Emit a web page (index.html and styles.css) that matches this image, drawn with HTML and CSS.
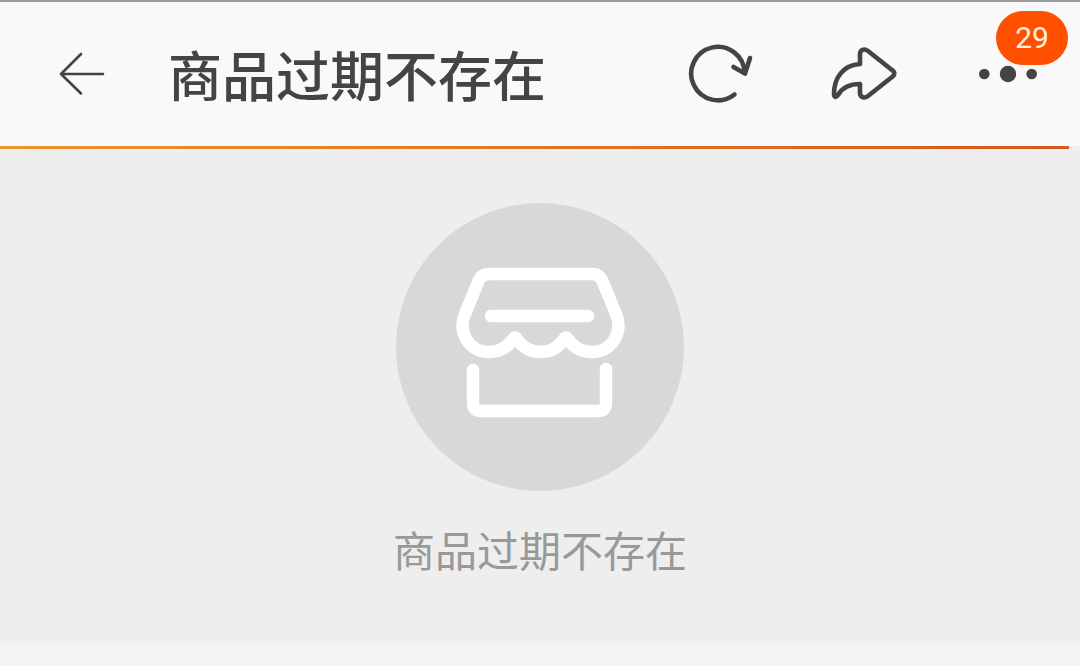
FILE: index.html
```html
<!DOCTYPE html>
<html lang="zh-CN">
<head>
    <meta charset="UTF-8">
    <meta name="viewport" content="width=device-width, initial-scale=1.0">
    <title>商品过期不存在</title>
    <link rel="stylesheet" href="styles.css">
</head>
<body>
    <header class="topbar">
        <button class="icon-btn back" type="button" aria-label="返回">
            <svg width="48" height="48" viewBox="0 0 48 48" stroke-width="2.6">
                <path d="M23 4 3 24l20 19.5M3 24h42"/>
            </svg>
        </button>
        <h1 class="title">商品过期不存在</h1>
        <div class="actions">
            <button class="icon-btn" type="button" aria-label="刷新">
                <svg width="72" height="72" viewBox="0 0 72 72" stroke-width="4.6">
                    <path d="M50.5 56.5A26.7 26.7 0 1 1 60.6 35"/>
                    <path d="M49.5 29 61 35.5 66 20"/>
                </svg>
            </button>
            <button class="icon-btn" type="button" aria-label="分享">
                <svg width="72" height="72" viewBox="0 0 72 72" stroke-width="4.6">
                    <path d="M32 26V16c0-4 4-6 8-3l24 19c3 2 3 5 0 7L40 58c-4 3-8 1-8-3V46C22 46 14 50 10 57 8 60 6 59 6 56 6 40 15 27 32 26Z"/>
                </svg>
            </button>
            <button class="icon-btn" type="button" aria-label="更多">
                <svg class="dots" width="72" height="72" viewBox="0 0 72 72">
                    <circle cx="12.3" cy="36" r="5.3"/>
                    <circle cx="36" cy="36" r="8.2"/>
                    <circle cx="59.7" cy="36" r="5.3"/>
                </svg>
                <span class="badge">29</span>
            </button>
        </div>
    </header>

    <main class="empty">
        <div class="progress"></div>
        <div class="picture">
            <svg width="288" height="288" viewBox="0 0 288 288" stroke-width="12.4">
                <!-- awning -->
                <path d="M93 71H196c5 0 8 2 10 6l14 34c8 19-5 38-24 38-11 0-19-5-25-14q-1-1-2 0c-6 9-14 14-24 14s-19-5-25-14q-1-1-2 0c-6 9-14 14-25 14-19 0-32-19-24-38l14-34c2-4 5-6 10-6Z"/>
                <path d="M95 113H192"/>
                <!-- shop front -->
                <path d="M77 167V200q0 8 8 8H202q8 0 8-8V166"/>
            </svg>
        </div>
        <p class="message">商品过期不存在</p>
    </main>
</body>
</html>
```
FILE: styles.css
```css
* {
    box-sizing: border-box;
}

body {
    margin: 0;
    background-color: #f4f4f4;
    font-family: Roboto, "Noto Sans CJK SC", sans-serif;
    color: #444;
}

.topbar {
    display: flex;
    align-items: center;
    height: 146px;
    padding: 0 36px 0 58px;
    border-top: 2px solid #9c9c9c;
    background-color: #f9f9f9;
}

.icon-btn {
    position: relative;
    display: block;
    padding: 0;
    border: none;
    background: none;
    color: inherit;
    font-family: inherit;
    cursor: pointer;
}

svg {
    display: block;
    fill: none;
    stroke: currentColor;
    stroke-linecap: round;
    stroke-linejoin: round;
}

.dots {
    fill: currentColor;
    stroke: none;
}

.title {
    flex: 1;
    margin: 0 0 0 62px;
    padding-top: 10px;
    font-size: 54px;
    font-weight: 500;
    line-height: 72px;
    white-space: nowrap;
}

.actions {
    display: flex;
    gap: 72px;
}

/* Unread count, overlaps the "more" dots */
.badge {
    position: absolute;
    top: -27px;
    right: -24px;
    width: 72px;
    height: 54px;
    border-radius: 27px;
    background-color: #ff5000;
    color: #fff0dc;
    font-size: 30px;
    line-height: 54px;
    text-align: center;
}

.empty {
    display: flex;
    flex-direction: column;
    align-items: center;
    padding-bottom: 60px;
    background-color: #eee;
}

.progress {
    align-self: flex-start;
    width: 99%;
    height: 3px;
    background: linear-gradient(to right, #e8962e, #d4581f);
}

.picture {
    margin-top: 54px;
    border-radius: 50%;
    background-color: #d7d8da;
    color: #fff;
}

.message {
    margin: 32px 0 0;
    font-size: 42px;
    line-height: 60px;
    color: #999;
}
```
